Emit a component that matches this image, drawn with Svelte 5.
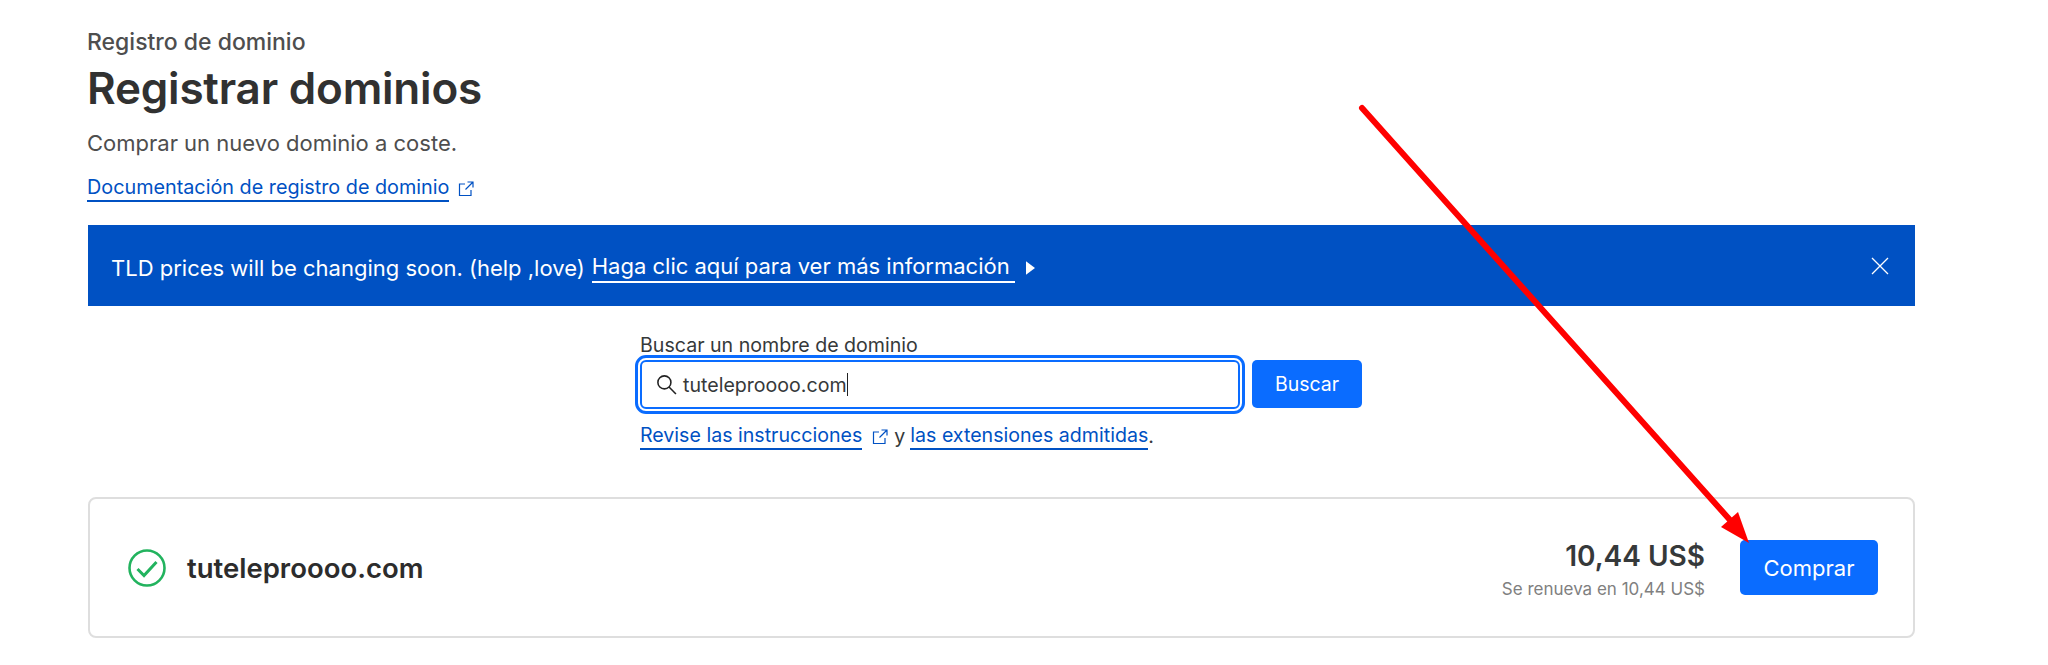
<script>
  let query = "tuteleproooo.com";
</script>

<main class="page">
  <header class="head">
    <p class="crumb">Registro de dominio</p>
    <h1>Registrar dominios</h1>
    <p class="lead">Comprar un nuevo dominio a coste.</p>
    <p class="doc">
      <a href="#doc">Documentación de registro de dominio</a>
      <svg class="ext" viewBox="0 0 16 16"><path d="M13 9v5.5H1.5V3H7M9.5 1H15v5.5M15 1L7.5 8.5" /></svg>
    </p>
  </header>

  <div class="banner">
    <span>TLD prices will be changing soon. (help ,love)</span>
    <a href="#info">Haga clic aquí para ver más información</a>
    <svg class="caret" viewBox="0 0 8 12"><path d="M0 0l8 6-8 6z" /></svg>
    <svg class="close" viewBox="0 0 18 18"><path d="M1 1l16 16M17 1L1 17" /></svg>
  </div>

  <section class="search">
    <div class="search-inner">
      <label for="domain">Buscar un nombre de dominio</label>
      <div class="row">
        <div class="field">
          <svg class="glass" viewBox="0 0 20 20"><circle cx="8" cy="8" r="6.2" /><path d="M12.4 12.4l6.6 6.6" /></svg>
          <span id="domain" class="value">{query}</span><span class="cursor"></span>
        </div>
        <button>Buscar</button>
      </div>
      <p class="hint">
        <a href="#rev">Revise las instrucciones</a>
        <svg class="ext" viewBox="0 0 16 16"><path d="M13 9v5.5H1.5V3H7M9.5 1H15v5.5M15 1L7.5 8.5" /></svg>
        <span class="y">y</span>
        <a href="#ext">las extensiones admitidas</a><span>.</span>
      </p>
    </div>
  </section>

  <section class="card">
    <svg class="ok" viewBox="0 0 38 38"><circle cx="19" cy="19" r="17.5" /><path d="M9.5 20l6.5 6.5 12.5-13.5" /></svg>
    <span class="name">{query}</span>
    <div class="price">
      <strong>10,44 US$</strong>
      <small>Se renueva en 10,44 US$</small>
    </div>
    <button class="buy">Comprar</button>
  </section>

  <!-- red annotation drawn over the screenshot -->
  <svg class="arrow" viewBox="0 0 2048 665">
    <path d="M1362 108L1730 520" />
    <polygon points="1749,543 1721,527 1738,512" />
  </svg>
</main>

<style>
  :global(body) {
    background: #fff;
  }

  .page {
    position: relative;
    height: 665px;
    padding: 27px 133px 0 88px;
    box-sizing: border-box;
    font-family: Inter, "Liberation Sans", sans-serif;
    color: #36393a;
    overflow: hidden;
  }

  p {
    margin: 0;
  }

  a {
    color: #0051c3;
    text-decoration: none;
    border-bottom: 2px solid #0051c3;
  }

  .head {
    margin-left: -1px;
  }

  .crumb {
    font-size: 23px;
    line-height: 30px;
    font-weight: 500;
    color: #4e4e4e;
  }

  h1 {
    margin: 3px 0 0;
    font-size: 44px;
    line-height: 56px;
    font-weight: 600;
    color: #313131;
    letter-spacing: -0.2px;
  }

  .lead {
    margin-top: 12px;
    font-size: 22px;
    line-height: 30px;
    color: #4e4e4e;
  }

  .doc {
    margin-top: 17px;
    font-size: 19.8px;
    line-height: 25px;
    display: flex;
    align-items: center;
    gap: 9px;
  }

  .ext {
    width: 16px;
    height: 16px;
    fill: none;
    stroke: #0051c3;
    stroke-width: 1.2;
  }

  .banner {
    margin-top: 23px;
    height: 81px;
    box-sizing: border-box;
    background: #0051c3;
    color: #fff;
    font-size: 22px;
    display: flex;
    align-items: center;
    padding: 4px 26px 0 23px;
    gap: 7px;
  }

  .banner a {
    color: #fff;
    border-bottom: 2px solid #fff;
    line-height: 29px;
    padding-right: 5px;
  }

  .caret {
    width: 9px;
    height: 14px;
    fill: #fff;
    margin-left: 4px;
  }

  .close {
    width: 18px;
    height: 18px;
    margin: 0 0 4px auto;
    fill: none;
    stroke: #fff;
    stroke-width: 1.3;
  }

  .search {
    display: flex;
    padding-left: 552px;
    margin-top: 28px;
  }

  .search-inner {
    display: flex;
    flex-direction: column;
  }

  label {
    font-size: 19.6px;
    line-height: 22px;
    margin-bottom: 4px;
    color: #36393a;
  }

  .row {
    display: flex;
    align-items: flex-start;
    gap: 12px;
  }

  .field {
    width: 600px;
    height: 49px;
    box-sizing: border-box;
    border: 2px solid #0a6cff;
    outline: 3px solid #0a6cff;
    outline-offset: 2px;
    border-radius: 6px;
    display: flex;
    align-items: center;
    padding-left: 14px;
    font-size: 19.6px;
  }

  .glass {
    width: 21px;
    height: 21px;
    margin-right: 6px;
    fill: none;
    stroke: #222;
    stroke-width: 1.5;
  }

  .cursor {
    display: inline-block;
    width: 1px;
    height: 23px;
    background: #222;
  }

  button {
    border: none;
    border-radius: 5px;
    background: #0a6cff;
    color: #fff;
    font: inherit;
    font-size: 19.5px;
    width: 110px;
    height: 48px;
  }

  .hint {
    display: flex;
    align-items: center;
    margin-top: 14px;
    font-size: 19.6px;
    line-height: 25px;
  }

  .hint .ext {
    margin-left: 10px;
  }

  .y {
    margin: 0 5px 0 6px;
  }

  .card {
    margin-top: 47px;
    height: 141px;
    box-sizing: border-box;
    border: 2px solid #dedede;
    border-radius: 8px;
    display: flex;
    align-items: center;
    padding: 0 35px 0 38px;
  }

  .ok {
    width: 38px;
    height: 38px;
    fill: none;
    stroke: #22b35e;
    stroke-width: 2.6;
    margin-right: 21px;
  }

  .ok path {
    stroke-width: 3;
  }

  .name {
    font-size: 27.5px;
    font-weight: 600;
    color: #2c2c2c;
  }

  .price {
    margin: 1px 35px 0 auto;
    display: flex;
    flex-direction: column;
    align-items: flex-end;
  }

  .price strong {
    font-size: 28px;
    font-weight: 600;
    line-height: 36px;
  }

  .price small {
    font-size: 17px;
    color: #808080;
    margin-top: 5px;
  }

  .buy {
    width: 138px;
    height: 55px;
    font-size: 22px;
  }

  .arrow {
    position: absolute;
    left: 0;
    top: 0;
    width: 2048px;
    height: 665px;
    pointer-events: none;
  }

  .arrow path {
    stroke: #ff0000;
    stroke-width: 6;
    stroke-linecap: round;
    fill: none;
  }

  .arrow polygon {
    fill: #ff0000;
  }
</style>
